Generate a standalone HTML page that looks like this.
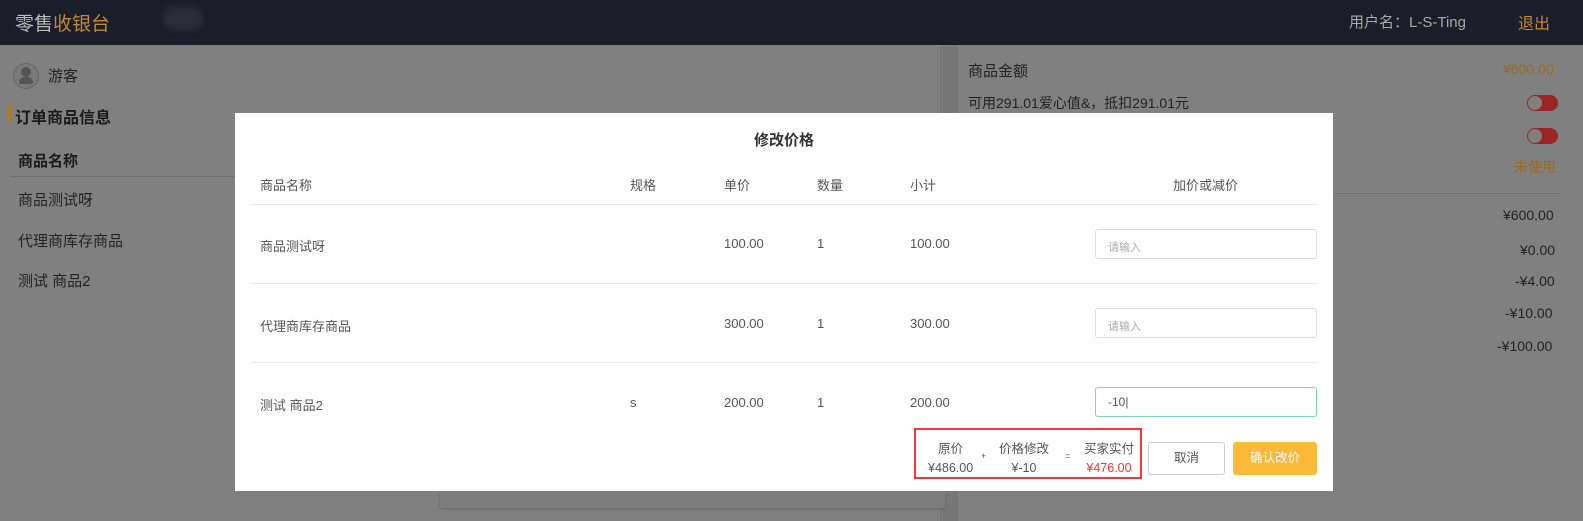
<!DOCTYPE html>
<html><head><meta charset="utf-8"><style>
*{margin:0;padding:0;box-sizing:border-box}
body{width:1583px;height:521px;overflow:hidden;background:#808080;font-family:"Liberation Sans","Noto Sans CJK SC",sans-serif;position:relative;color:#333}
.a{position:absolute;white-space:nowrap}
.hd{position:absolute;left:0;top:0;width:1583px;height:45px;background:#1b1d2a}
.bg{color:#1a1a1a}
.or{color:#9a6a1e}
.m{position:absolute;left:235px;top:113px;width:1098px;height:378px;background:#fff;font-size:13px;color:#555}
.m .a{font-size:13px}
.ln{position:absolute;left:17px;width:1066px;height:1px;background:#e8e8e8}
.in{position:absolute;left:860px;width:222px;height:30px;border:1px solid #ddd;border-radius:3px;font-size:11px;color:#aaa;padding:9px 12px}
.tg{position:absolute;left:1527px;width:31px;height:16px;border-radius:8px;background:#9b2424}
.tg:after{content:"";position:absolute;left:1px;top:1px;width:14px;height:14px;border-radius:7px;background:#808080}
</style></head><body>
<div class="hd"></div>
<div class="a" style="left:15px;top:9px;font-size:19px;color:#bbb">零售<span style="color:#c08a2e">收银台</span></div>
<div class="a" style="left:163px;top:6px;width:40px;height:24px;background:#2a2c38;border-radius:12px;filter:blur(3px)"></div>
<div class="a" style="left:1349px;top:11px;font-size:15px;color:#aaa">用户名：L-S-Ting</div>
<div class="a" style="left:1518px;top:10px;font-size:16px;color:#c08a2e">退出</div>
<div class="a" style="left:940px;top:45px;width:18px;height:476px;background:#777"></div>
<div class="a" style="left:440px;top:491px;width:505px;height:17px;background:#7d7d7d;box-shadow:0 1px 2px #666"></div>
<div class="a" style="left:13px;top:63px;width:26px;height:26px;border:1px solid #666;border-radius:50%;background:#7a7a7a"></div>
<div class="a" style="left:21px;top:67px;width:10px;height:10px;border-radius:50%;background:#555"></div>
<div class="a" style="left:19px;top:77px;width:14px;height:7px;border-radius:7px 7px 2px 2px;background:#555"></div>
<div class="a" style="left:48px;top:65px;font-size:15px;color:#222">游客</div>
<div class="a" style="left:8px;top:106px;width:3px;height:16px;background:#b07a20"></div>
<div class="a bg" style="left:15px;top:104px;font-size:16px;font-weight:bold">订单商品信息</div>
<div class="a bg" style="left:18px;top:150px;font-size:15px;font-weight:bold">商品名称</div>
<div class="a" style="left:10px;top:176px;width:230px;height:1px;background:#707070"></div>
<div class="a bg" style="left:18px;top:189px;font-size:15px;color:#222">商品测试呀</div>
<div class="a bg" style="left:18px;top:230px;font-size:15px;color:#222">代理商库存商品</div>
<div class="a bg" style="left:18px;top:270px;font-size:15px;color:#222">测试 商品2</div>
<div class="a" style="left:968px;top:60px;font-size:15px;color:#222">商品金额</div>
<div class="a or" style="left:1503px;top:61px;font-size:14px">¥600.00</div>
<div class="a" style="left:968px;top:93px;font-size:14px;color:#222">可用291.01爱心值&amp;，抵扣291.01元</div>
<div class="tg" style="top:95px"></div><div class="tg" style="top:128px"></div>
<div class="a or" style="left:1514px;top:157px;font-size:14px">未使用</div>
<div class="a" style="left:1333px;top:193px;width:230px;height:1px;background:#777"></div>
<div class="a" style="left:1503px;top:207px;font-size:14px;color:#222">¥600.00</div>
<div class="a" style="left:1520px;top:242px;font-size:14px;color:#222">¥0.00</div>
<div class="a" style="left:1515px;top:273px;font-size:14px;color:#222">-¥4.00</div>
<div class="a" style="left:1505px;top:305px;font-size:14px;color:#222">-¥10.00</div>
<div class="a" style="left:1497px;top:338px;font-size:14px;color:#222">-¥100.00</div>
<div class="m">
<div class="a" style="left:0;width:1098px;text-align:center;top:16px;font-size:15px;font-weight:bold;color:#333">修改价格</div>
<div class="a" style="left:25px;top:62px">商品名称</div><div class="a" style="left:395px;top:62px">规格</div><div class="a" style="left:489px;top:62px">单价</div><div class="a" style="left:582px;top:62px">数量</div><div class="a" style="left:675px;top:62px">小计</div><div class="a" style="left:938px;top:62px">加价或减价</div>
<div class="ln" style="top:91px"></div>
<div class="a" style="left:25px;top:123px">商品测试呀</div><div class="a" style="left:489px;top:123px">100.00</div><div class="a" style="left:582px;top:123px">1</div><div class="a" style="left:675px;top:123px">100.00</div>
<div class="in" style="top:116px">请输入</div>
<div class="ln" style="top:170px"></div>
<div class="a" style="left:25px;top:203px">代理商库存商品</div><div class="a" style="left:489px;top:203px">300.00</div><div class="a" style="left:582px;top:203px">1</div><div class="a" style="left:675px;top:203px">300.00</div>
<div class="in" style="top:195px">请输入</div>
<div class="ln" style="top:249px"></div>
<div class="a" style="left:25px;top:282px">测试 商品2</div><div class="a" style="left:395px;top:282px">s</div><div class="a" style="left:489px;top:282px">200.00</div><div class="a" style="left:582px;top:282px">1</div><div class="a" style="left:675px;top:282px">200.00</div>
<div class="in" style="top:274px;border-color:#7fd6c0;color:#555;font-size:12px;padding:7px 12px">-10|</div>
<div class="a" style="left:679px;top:315px;width:228px;height:51px;border:2px solid #f33"></div>
<div class="a" style="left:693px;top:327px;text-align:center;line-height:19px;font-size:12.5px">原价<br>¥486.00</div>
<div class="a" style="left:746px;top:338px;font-size:9px">+</div>
<div class="a" style="left:764px;top:327px;text-align:center;line-height:19px;font-size:12.5px">价格修改<br>¥-10</div>
<div class="a" style="left:830px;top:338px;font-size:9px">=</div>
<div class="a" style="left:849px;top:327px;text-align:center;line-height:19px;font-size:12.5px">买家实付<br><span style="color:#f33">¥476.00</span></div>
<div class="a" style="left:913px;top:329px;width:77px;height:33px;border:1px solid #ccc;border-radius:3px;text-align:center;line-height:31px;font-size:12.5px">取消</div>
<div class="a" style="left:998px;top:329px;width:84px;height:33px;background:#fdb93a;border-radius:3px;text-align:center;line-height:33px;font-size:12.5px;color:#fff">确认改价</div>
</div>
</body></html>
